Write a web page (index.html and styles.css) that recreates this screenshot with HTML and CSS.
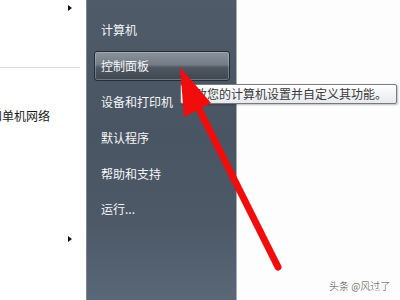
FILE: index.html
```html
<!DOCTYPE html>
<html lang="zh">
<head>
<meta charset="utf-8">
<link rel="stylesheet" href="styles.css">
</head>
<body>
<div class="screen">
  <div class="left">
    <div class="tri tri-top"></div>
    <div class="divider"></div>
    <div class="net">和单机网络</div>
    <div class="tri tri-bottom"></div>
  </div>
  <div class="panel">
    <div class="item"><div class="label">计算机</div></div>
    <div class="item sel"><div class="label">控制面板</div></div>
    <div class="item"><div class="label">设备和打印机</div></div>
    <div class="item"><div class="label">默认程序</div></div>
    <div class="item"><div class="label">帮助和支持</div></div>
    <div class="item"><div class="label">运行...</div></div>
  </div>
  <div class="right"></div>
  <div class="tooltip">更改您的计算机设置并自定义其功能。</div>
  <svg class="red-arrow" width="400" height="300" viewBox="0 0 400 300">
    <line x1="198" y1="107" x2="278" y2="267" stroke="#f20d0d" stroke-width="7" stroke-linecap="round"/>
    <polygon points="180,67 211,103 184,117" fill="#f20d0d"/>
  </svg>
  <div class="watermark">头条 @风过了</div>
</div>
</body>
</html>
```
FILE: styles.css
```css
html, body {
  margin: 0;
  padding: 0;
  background: #ffffff;
}
.screen {
  position: relative;
  width: 400px;
  height: 300px;
  display: flex;
  overflow: hidden;
  font-family: "Noto Sans CJK SC", "Noto Sans", sans-serif;
}
.left {
  width: 86px;
  flex: none;
  background: #ffffff;
  display: flex;
  flex-direction: column;
}
.tri {
  width: 0;
  height: 0;
  border-left: 4px solid #111;
  border-top: 3.5px solid transparent;
  border-bottom: 3.5px solid transparent;
  margin-left: 68px;
}
.tri-top { margin-top: 5px; }
.divider {
  width: 80px;
  height: 1px;
  background: #dedede;
  margin-top: 56px;
}
.net {
  margin-top: 40px;
  margin-left: -10px;
  font-size: 12px;
  line-height: 16px;
  color: #1a1a1a;
  white-space: nowrap;
}
.tri-bottom { margin-top: 112px; }
.panel {
  width: 149px;
  flex: none;
  border-left: 1px solid #7a8694;
  border-right: 1px solid #a4adb6;
  background: linear-gradient(#4f5b69 0%, #4a5563 45%, #4d5967 75%, #5a6777 100%);
  padding-top: 12px;
  box-sizing: content-box;
}
.item {
  height: 35.8px;
  display: flex;
}
.label {
  flex: 1;
  margin: 3px 6px 3px 7px;
  border: 1px solid transparent;
  border-radius: 3px;
  padding-left: 6px;
  display: flex;
  align-items: center;
  font-size: 12px;
  color: #f4f6f8;
  white-space: nowrap;
}
.sel .label {
  border-color: #262c33;
  background: linear-gradient(#8a939c 0%, #747d87 45%, #505963 55%, #3e4650 100%);
  box-shadow: inset 0 0 0 1px rgba(200, 210, 220, 0.35);
}
.right {
  flex: 1;
  background: #fdfdfd;
}
.tooltip {
  position: absolute;
  left: 180px;
  top: 84px;
  width: 210px;
  height: 18px;
  padding: 0 3px 0 2px;
  border: 1px solid #7a7a7a;
  border-radius: 2px;
  background: linear-gradient(#ffffff, #e6e9ee);
  box-shadow: 1px 1px 2px rgba(0, 0, 0, 0.25);
  font-size: 12px;
  line-height: 18px;
  color: #3a3a3a;
  white-space: nowrap;
}
.red-arrow {
  position: absolute;
  left: 0;
  top: 0;
}
.watermark {
  position: absolute;
  left: 329px;
  top: 279px;
  font-size: 10px;
  line-height: 14px;
  color: #4a4a4a;
  white-space: nowrap;
  font-weight: 300;
}
```
